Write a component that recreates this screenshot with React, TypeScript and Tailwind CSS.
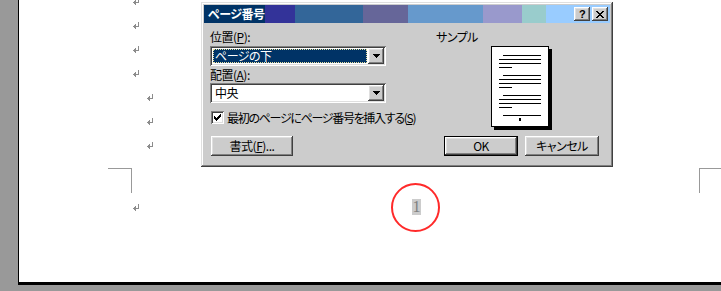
import React from 'react';

const raised =
  'shadow-[inset_-1px_-1px_0_#404040,inset_1px_1px_0_#ffffff,inset_-2px_-2px_0_#808080,inset_2px_2px_0_#dfdfdf]';
const sunken =
  'shadow-[inset_1px_1px_0_#808080,inset_-1px_-1px_0_#ffffff,inset_2px_2px_0_#404040,inset_-2px_-2px_0_#dfdfdf]';
const windowEdge =
  'shadow-[inset_-1px_-1px_0_#404040,inset_1px_1px_0_#dfdfdf,inset_-2px_-2px_0_#808080,inset_2px_2px_0_#ffffff]';

function ReturnMark() {
  return (
    <svg width="8" height="7" viewBox="0 0 8 7" shapeRendering="crispEdges" className="block">
      <rect x="6" y="0" width="1" height="5" fill="#8c8c8c" />
      <rect x="1" y="4" width="6" height="1" fill="#8c8c8c" />
      <rect x="2" y="3" width="1" height="3" fill="#8c8c8c" />
      <rect x="3" y="2" width="1" height="5" fill="#8c8c8c" />
    </svg>
  );
}

function DownArrow() {
  return (
    <svg width="7" height="4" viewBox="0 0 7 4" shapeRendering="crispEdges">
      <rect x="0" y="0" width="7" height="1" fill="#000" />
      <rect x="1" y="1" width="5" height="1" fill="#000" />
      <rect x="2" y="2" width="3" height="1" fill="#000" />
      <rect x="3" y="3" width="1" height="1" fill="#000" />
    </svg>
  );
}

function Combo({ text, selected }: { text: string; selected?: boolean }) {
  return (
    <div className={`flex h-[20px] w-[176px] bg-white p-[2px] ${sunken}`}>
      <div className="flex-1 p-[1px]">
        {selected ? (
          <div className="h-full border border-dotted border-[#e8e0a0] bg-[#003366] pl-[1px] text-[12px] leading-[12px] text-white">
            {text}
          </div>
        ) : (
          <div className="pl-[2px] text-[12px] leading-[14px]">{text}</div>
        )}
      </div>
      <div className={`flex h-[16px] w-[16px] items-center justify-center bg-[#cccccc] ${raised}`}>
        <DownArrow />
      </div>
    </div>
  );
}

function SamplePage() {
  const paras = [9, 29, 49];
  return (
    <svg width="62" height="84" viewBox="0 0 62 84" shapeRendering="crispEdges" className="block">
      <rect x="3" y="3" width="58" height="81" fill="#000" />
      <rect x="0.5" y="0.5" width="57" height="80" fill="#fff" stroke="#000" />
      {paras.map((y) => (
        <g key={y} fill="#000">
          <rect x="12" y={y} width="38" height="1" />
          <rect x="8" y={y + 4} width="42" height="1" />
          <rect x="8" y={y + 8} width="42" height="1" />
          <rect x="8" y={y + 12} width="13" height="1" />
        </g>
      ))}
      <rect x="12" y="69" width="38" height="1" fill="#000" />
      <rect x="28" y="72" width="2" height="3" fill="#000" />
    </svg>
  );
}

function Dialog() {
  return (
    <div
      className={`absolute left-[201px] top-[2px] h-[165px] w-[412px] bg-[#cccccc] p-[3px] font-['Noto_Sans_CJK_JP','Noto_Sans',sans-serif] text-[12px] tracking-[-0.5px] text-black [font-feature-settings:'palt'] ${windowEdge}`}
    >
      <div className="flex h-[18px] items-center bg-[linear-gradient(to_right,#003366_0px,#003366_61px,#333399_61px,#333399_91px,#336699_91px,#336699_159px,#666699_159px,#666699_204px,#6699cc_204px,#6699cc_279px,#9999cc_279px,#9999cc_318px,#99cccc_318px,#99cccc_342px,#99ccff_342px)] pl-[4px] pr-[2px]">
        <span className="text-[12px] font-bold leading-[14px] text-white">ページ番号</span>
        <div className="ml-auto flex gap-[2px]">
          <div className={`flex h-[14px] w-[16px] items-center justify-center bg-[#cccccc] ${raised}`}>
            <span className="font-['Liberation_Sans',sans-serif] text-[11px] font-bold leading-[11px]">?</span>
          </div>
          <div className={`flex h-[14px] w-[16px] items-center justify-center bg-[#cccccc] ${raised}`}>
            <svg width="8" height="7" viewBox="0 0 8 7" shapeRendering="crispEdges">
              <path d="M0 0h2v1h-2zM6 0h2v1h-2zM1 1h2v1h-2zM5 1h2v1h-2zM2 2h4v1h-4zM3 3h2v1h-2zM2 4h4v1h-4zM1 5h2v1h-2zM5 5h2v1h-2zM0 6h2v1h-2zM6 6h2v1h-2z" fill="#000" />
            </svg>
          </div>
        </div>
      </div>

      <div className="flex h-[113px] pl-[6px]">
        <div className="w-[176px] pt-[7px]">
          <div className="h-[14px] leading-[14px]">
            位置(<span className="underline">P</span>):
          </div>
          <div className="mt-[2px]">
            <Combo text="ページの下" selected />
          </div>
          <div className="mt-[2px] h-[14px] leading-[14px]">
            配置(<span className="underline">A</span>):
          </div>
          <div className="mt-[1px]">
            <Combo text="中央" />
          </div>
          <div className="mt-[8px] flex h-[13px] items-center whitespace-nowrap pl-[1px]">
            <div className={`flex h-[13px] w-[13px] shrink-0 items-center justify-center bg-white ${sunken}`}>
              <svg width="7" height="7" viewBox="0 0 7 7" shapeRendering="crispEdges">
                <path d="M6 0h1v3h-1zM5 1h1v3h-1zM4 2h1v3h-1zM0 2h1v3h-1zM1 3h1v3h-1zM2 4h1v3h-1zM3 3h1v3h-1z" fill="#000" />
              </svg>
            </div>
            <span className="ml-[3px] leading-[14px] tracking-[-1.3px]">
              最初のページにページ番号を挿入する(<span className="underline">S</span>)
            </span>
          </div>
        </div>
        <div className="ml-[50px] pt-[7px]">
          <div className="h-[14px] leading-[14px]">サンプル</div>
          <div className="ml-[55px] mt-[2px]">
            <SamplePage />
          </div>
        </div>
      </div>

      <div className="flex pl-[7px]">
        <div className={`flex h-[20px] w-[82px] items-center justify-center bg-[#cccccc] leading-[14px] ${raised}`}>
          書式(<span className="underline">F</span>)...
        </div>
        <div className="ml-[151px] h-[20px] w-[74px] border border-black">
          <div className={`flex h-full w-full items-center justify-center bg-[#cccccc] leading-[14px] ${raised}`}>OK</div>
        </div>
        <div className={`ml-[7px] flex h-[20px] w-[74px] items-center justify-center bg-[#cccccc] leading-[14px] ${raised}`}>
          キャンセル
        </div>
      </div>
    </div>
  );
}

export default function App() {
  return (
    <div className="relative h-[291px] w-[721px] overflow-hidden bg-[#999999]">
      <div className="ml-[18px] h-[285px] overflow-hidden border-b-[3px] border-l border-black bg-white">
        <div className="-mt-[2px]">
          {[0, 1, 2, 3].map((i) => (
            <div key={i} className="h-[24px] pl-[113px]">
              <ReturnMark />
            </div>
          ))}
          {[0, 1, 2].map((i) => (
            <div key={i} className="h-[24px] pl-[127px]">
              <ReturnMark />
            </div>
          ))}
        </div>
        <div className="mt-[2px] flex">
          <div className="ml-[89px] h-[25px] w-[24px] shrink-0 border-r border-t border-[#999999]" />
          <div className="ml-[567px] h-[25px] w-[30px] shrink-0 border-l border-t border-[#999999]" />
        </div>
        <div className="mt-[6px] flex h-[16px] items-center pl-[113px]">
          <ReturnMark />
          <span className="relative ml-[272px] flex h-[16px] w-[9px] items-center justify-center bg-[#cccccc] font-['Liberation_Serif',serif] text-[16px] leading-[16px] text-[#808080]">
            1
            <span className="absolute left-[-21px] top-[-16px] h-[49px] w-[49px] rounded-full border-2 border-[#ff2a2a]" />
          </span>
        </div>
      </div>
      <Dialog />
    </div>
  );
}
